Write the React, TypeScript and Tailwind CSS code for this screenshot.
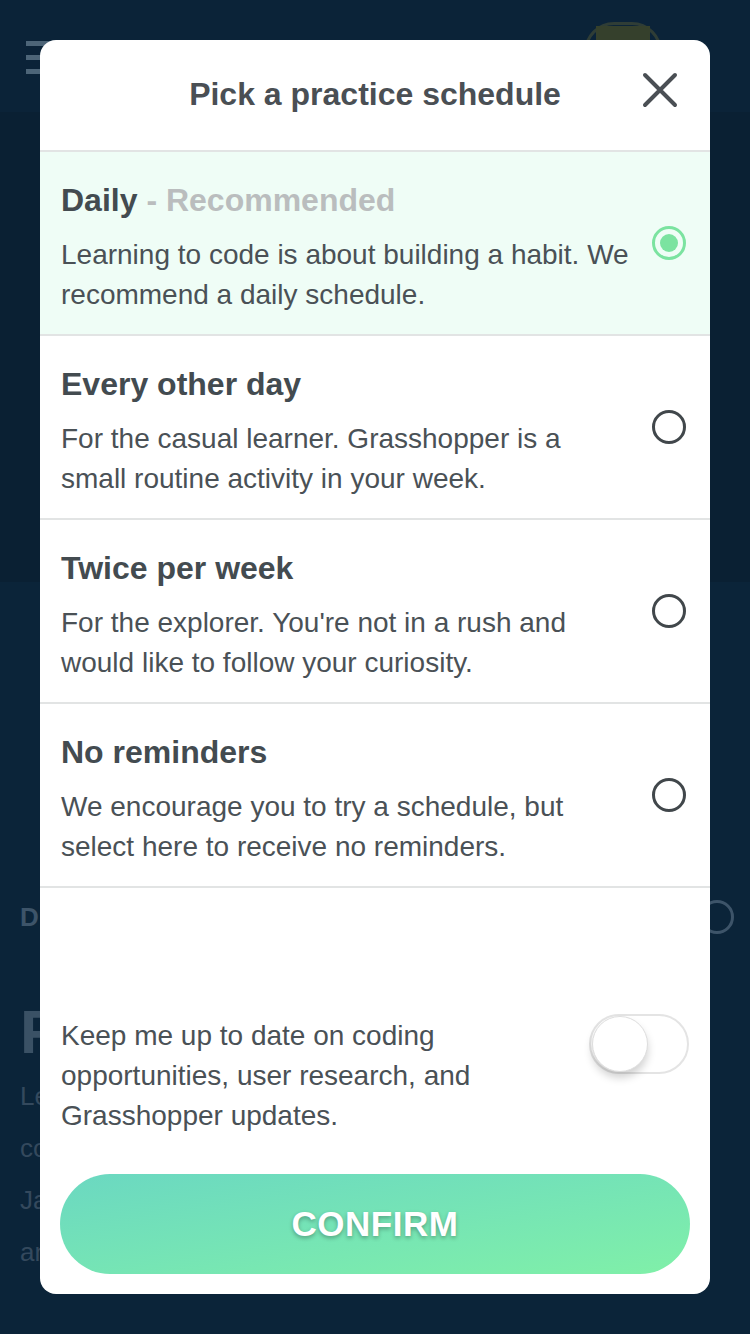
import { useState } from 'react'

type Option = {
  id: string
  title: string
  tag?: string
  desc: string[]
}

const options: Option[] = [
  {
    id: 'daily',
    title: 'Daily',
    tag: 'Recommended',
    desc: ['Learning to code is about building a habit. We', 'recommend a daily schedule.'],
  },
  {
    id: 'other',
    title: 'Every other day',
    desc: ['For the casual learner. Grasshopper is a', 'small routine activity in your week.'],
  },
  {
    id: 'twice',
    title: 'Twice per week',
    desc: ["For the explorer. You're not in a rush and", 'would like to follow your curiosity.'],
  },
  {
    id: 'none',
    title: 'No reminders',
    desc: ['We encourage you to try a schedule, but', 'select here to receive no reminders.'],
  },
]

const font = { fontFamily: '"Liberation Sans", Arial, sans-serif' }

function Radio({ on }: { on: boolean }) {
  if (on) {
    return (
      <div className="w-[34px] h-[34px] rounded-full border-[3px] border-[#7be3a0] flex items-center justify-center shrink-0">
        <div className="w-[18px] h-[18px] rounded-full bg-[#7be3a0]" />
      </div>
    )
  }
  return <div className="w-[34px] h-[34px] rounded-full border-[3px] border-[#41474b] shrink-0" />
}

// page that sits under the modal, only its edges show
function Background() {
  return (
    <div className="flex flex-col h-full text-[#3b5367]">
      <div className="h-[112px] flex items-start justify-between pl-[26px] pr-[88px] pt-[40px]">
        <div className="flex flex-col gap-[9px] pt-[1px]">
          <div className="w-[24px] h-[5px] bg-[#4d6578]" />
          <div className="w-[24px] h-[5px] bg-[#4d6578]" />
          <div className="w-[24px] h-[5px] bg-[#4d6578]" />
        </div>
        <div className="-mt-[18px] w-[78px] h-[60px] rounded-full border-[3px] border-[#2f3d36] flex justify-center">
          <div className="mt-[1px] w-[54px] h-[22px] bg-[#35402c]" />
        </div>
      </div>
      <div className="h-[470px] bg-[#0a2033]" />
      <div className="flex-1 bg-[#0b2439]" />
      <div className="absolute left-0 right-0 top-[895px] px-[20px]">
        <div className="flex items-center justify-between h-[44px]">
          <span className="text-[26px] font-bold text-[#3d5469]">D</span>
          <div className="w-[34px] h-[34px] rounded-full border-[3px] border-[#3d5469] -mr-[4px]" />
        </div>
        <div className="mt-[62px] text-[62px] font-bold leading-none text-[#3a5165]">F</div>
        <div className="mt-[7px] text-[26px] leading-[52px] text-[#34495d] whitespace-nowrap">
          <div>Le</div>
          <div>co</div>
          <div>Ja</div>
          <div>an</div>
        </div>
      </div>
    </div>
  )
}

export default function App() {
  const [selected, setSelected] = useState('daily')
  const [updates, setUpdates] = useState(false)

  return (
    <div className="relative w-[750px] h-[1334px] overflow-hidden bg-[#0b2338]" style={font}>
      <Background />

      <div className="absolute left-[40px] top-[40px] w-[670px] h-[1254px] bg-white rounded-[16px] flex flex-col overflow-hidden">
        <div className="relative h-[112px] shrink-0 flex items-center justify-center border-b-2 border-[#e2e4e4]">
          <h1 className="text-[32px] font-bold text-[#4a4f54] pb-[2px]">Pick a practice schedule</h1>
          <button className="absolute right-[32px] top-[32px] w-[36px] h-[36px]">
            <svg viewBox="0 0 36 36" className="w-full h-full">
              <path d="M3 3 L33 33 M33 3 L3 33" stroke="#4a4f54" strokeWidth="4" strokeLinecap="round" />
            </svg>
          </button>
        </div>

        {options.map((o) => {
          const on = selected === o.id
          return (
            <button
              key={o.id}
              onClick={() => setSelected(o.id)}
              className={`h-[184px] shrink-0 flex items-center text-left border-b-2 border-[#e2e4e4] pl-[21px] pr-[24px] ${on ? 'bg-[#effdf6]' : 'bg-white'}`}
            >
              <div className="flex-1 pt-[10px]">
                <div className="text-[32px] font-bold leading-[36px] text-[#434b50]">
                  {o.title}
                  {o.tag && <span className="text-[#babdbe]"> - {o.tag}</span>}
                </div>
                <div className="mt-[17px] text-[28px] leading-[40px] text-[#4a5156]">
                  {o.desc.map((d) => (
                    <div key={d}>{d}</div>
                  ))}
                </div>
              </div>
              <Radio on={on} />
            </button>
          )
        })}

        <div className="flex-1" />

        <div className="flex items-start justify-between pl-[21px] pr-[21px]">
          <p className="pt-[2px] text-[28px] leading-[40px] text-[#4a5156]">
            Keep me up to date on coding
            <br />
            opportunities, user research, and
            <br />
            Grasshopper updates.
          </p>
          <button
            onClick={() => setUpdates(!updates)}
            className={`w-[100px] h-[60px] rounded-full border-2 flex items-center p-[1px] ${updates ? 'bg-[#7be3a0] border-[#7be3a0] justify-end' : 'bg-white border-[#e4e4e4] justify-start'}`}
          >
            <div className="w-[56px] h-[56px] rounded-full bg-white border border-[#dedede] shadow-[0_6px_8px_rgba(0,0,0,0.18)]" />
          </button>
        </div>

        <div className="px-[20px] pt-[38px] pb-[20px]">
          <button className="w-full h-[100px] rounded-full bg-gradient-to-br from-[#6bd8c1] to-[#80f0a8] flex items-center justify-center">
            <span className="text-[35px] font-bold text-white tracking-[0.5px] [text-shadow:0_2px_4px_rgba(0,0,0,0.3)]">CONFIRM</span>
          </button>
        </div>
      </div>
    </div>
  )
}
